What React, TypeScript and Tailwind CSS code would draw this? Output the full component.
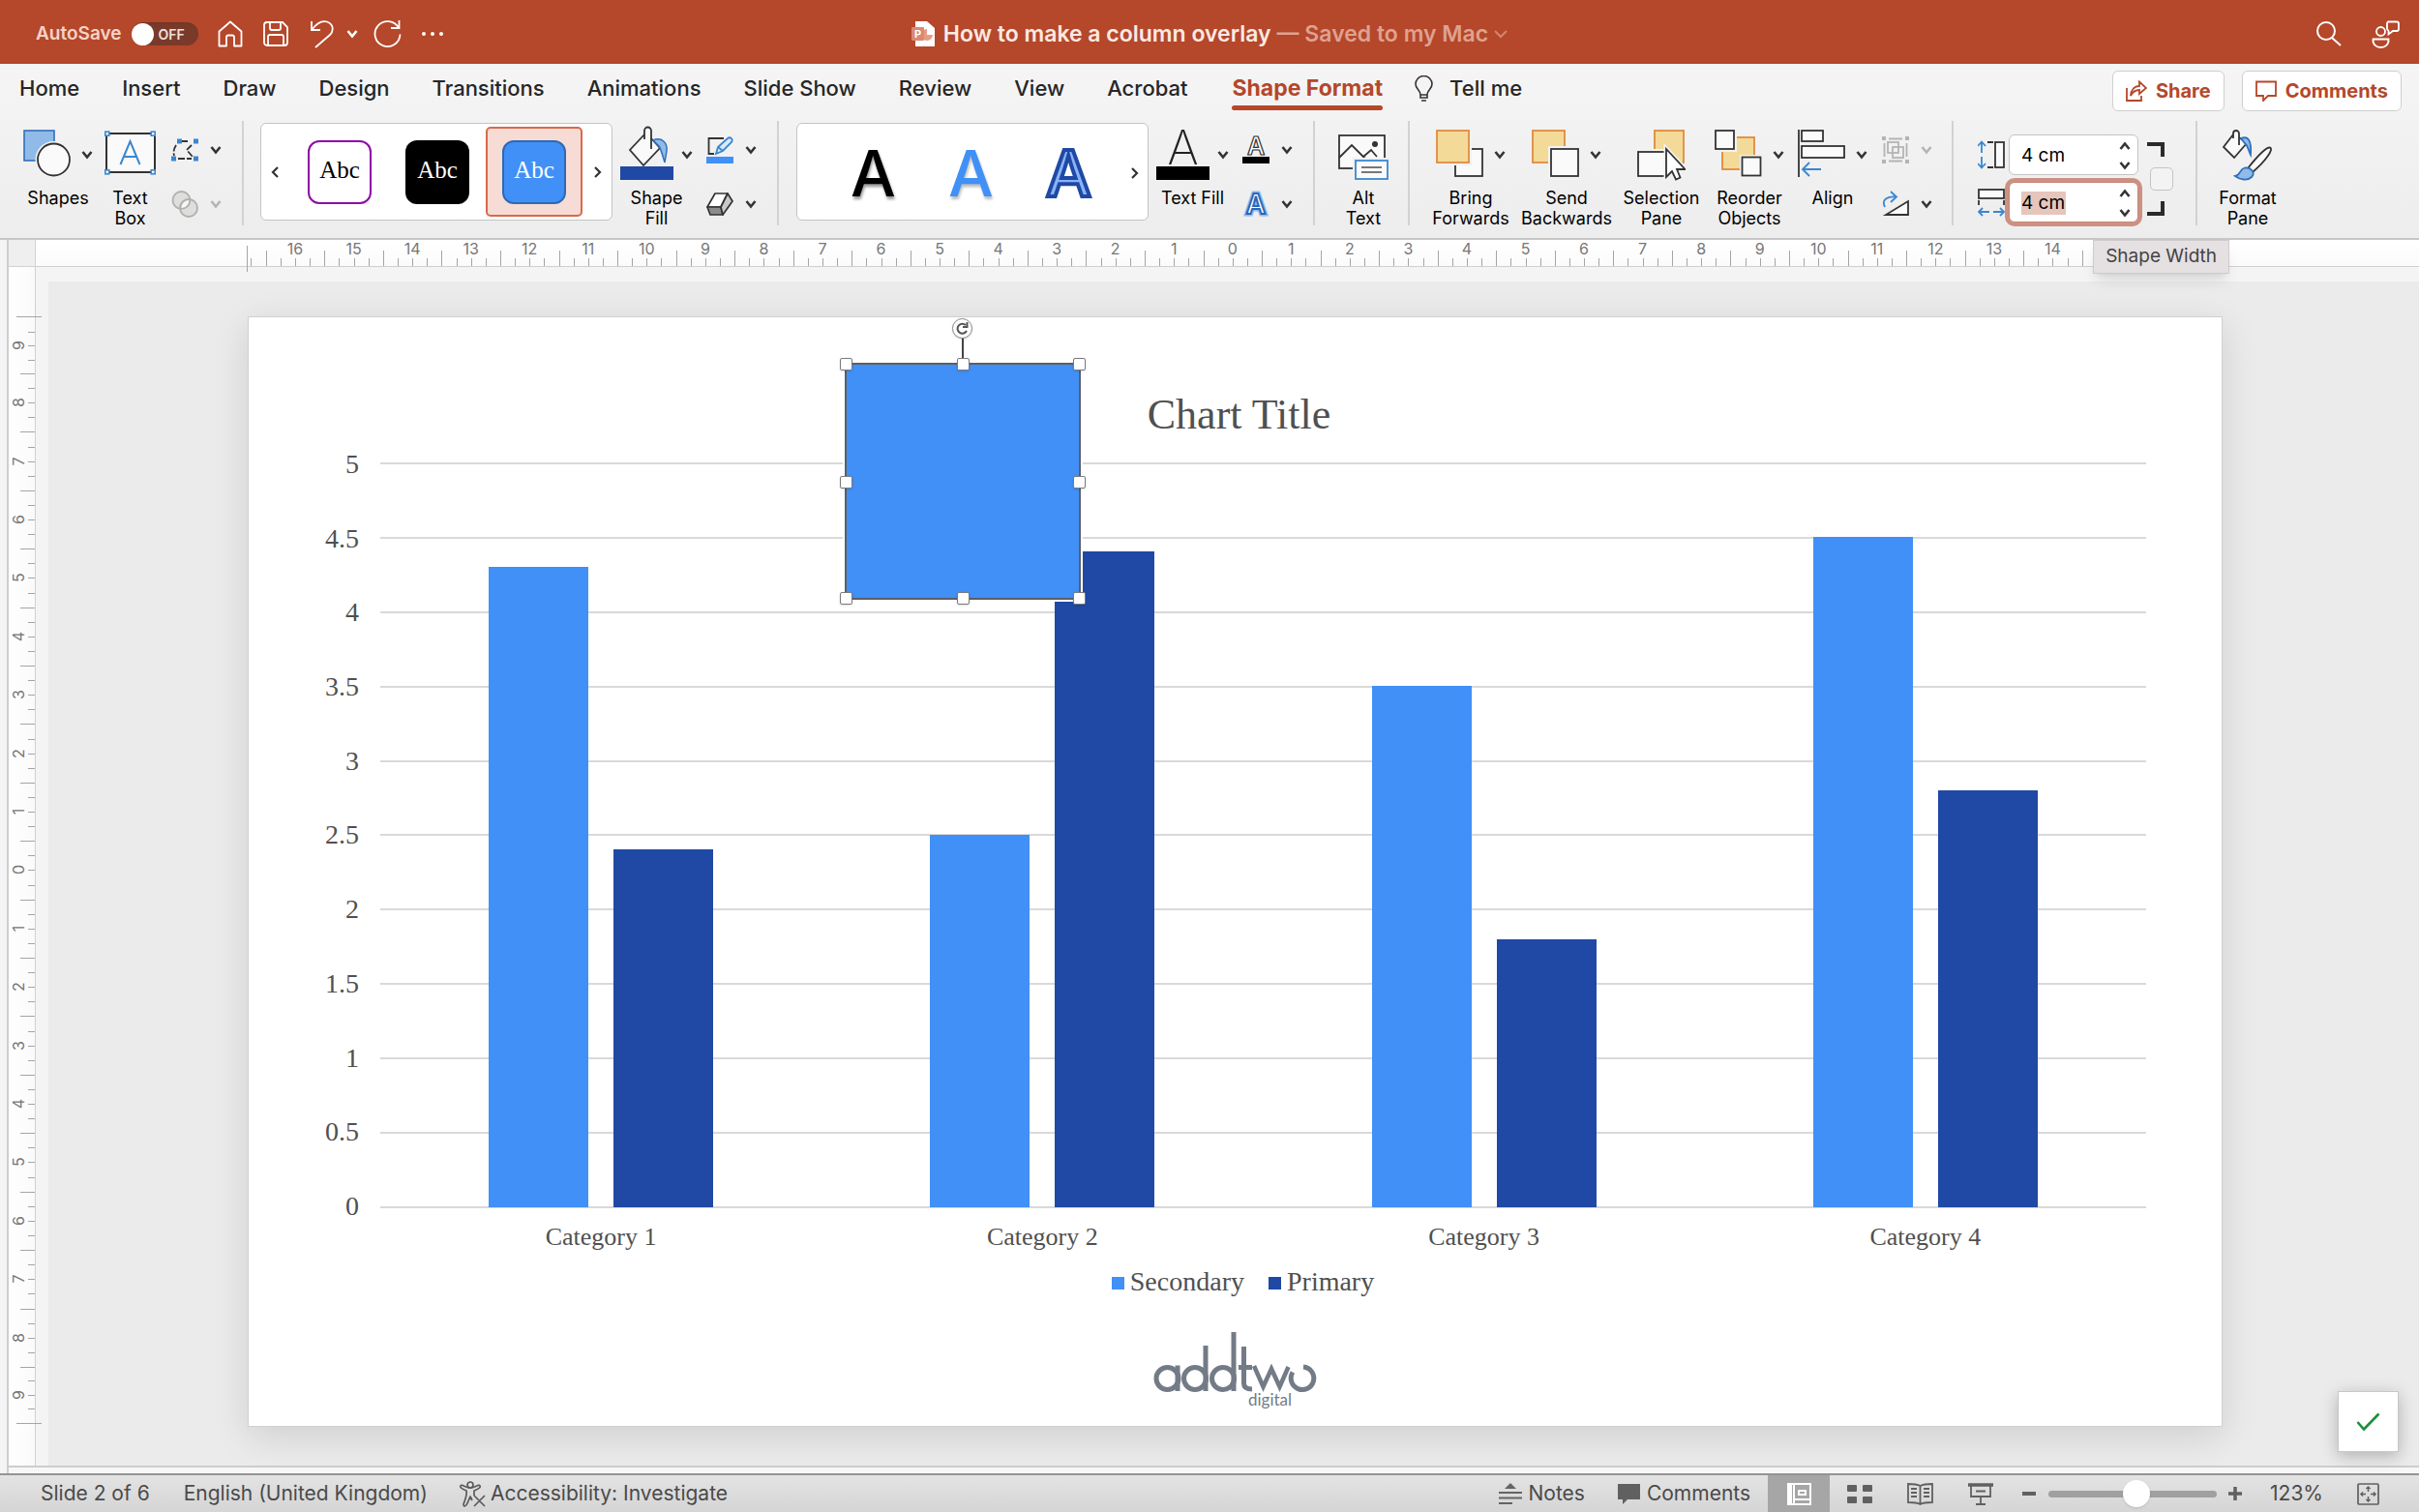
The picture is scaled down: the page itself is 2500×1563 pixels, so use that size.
import type { ReactNode } from "react";

const ink = "#333333";
const blue = "#3a87cf";

function Chevron({ className = "", color = ink }: { className?: string; color?: string }) {
  return (
    <svg width="12" height="12" viewBox="0 0 12 12" className={"shrink-0 " + className} fill="none" stroke={color} strokeWidth="2.6">
      <path d="M1.5 3 6 8.5 10.5 3" />
    </svg>
  );
}

function Divider() {
  return <div className="h-[108px] w-[2px] shrink-0 self-start bg-[#d2d2d2]" />;
}

function Tool({ icon, label, chevron = false, className, gap = "gap-[11px]" }: { icon: ReactNode; label: string[]; chevron?: boolean; className: string; gap?: string }) {
  return (
    <button className={"flex shrink-0 flex-col items-center pt-[9px] " + className}>
      <span className={"flex h-[54px] items-start " + gap}>
        {icon}
        {chevron && <Chevron className="mt-[20px]" />}
      </span>
      <span className="mt-[6px] flex flex-col items-center text-[18px] leading-[21px] whitespace-nowrap text-black">
        {label.map((l) => (
          <span key={l}>{l}</span>
        ))}
      </span>
    </button>
  );
}

function SmallPair({ items, className = "" }: { items: { name: string; icon: ReactNode; off?: boolean }[]; className?: string }) {
  return (
    <div className={"flex shrink-0 flex-col gap-[28px] pt-[16px] " + className}>
      {items.map((it) => (
        <button key={it.name} aria-label={it.name} className="flex h-[28px] items-center gap-[12px]">
          {it.icon}
          <Chevron color={it.off ? "#b4b4b4" : ink} />
        </button>
      ))}
    </div>
  );
}

/* ---------- ribbon icons ---------- */

const ShapesIcon = (
  <svg width="49" height="50" viewBox="0 0 49 50" className="overflow-visible">
    <rect x="1" y="1" width="31" height="31" fill="#90bbe8" stroke="#2f70bd" strokeWidth="1.6" />
    <circle cx="31.5" cy="31" r="19" fill="#f3f3f3" />
    <circle cx="31.5" cy="31" r="16.5" fill="#fafafa" stroke={ink} strokeWidth="1.8" />
  </svg>
);

const TextBoxIcon = (
  <svg width="53" height="50" viewBox="0 0 53 50">
    <rect x="2" y="4" width="50" height="40" fill="#fafafa" stroke={ink} strokeWidth="2" />
    <path d="M16.500 36 26.500 12 36.500 36M20 28H33" fill="none" stroke={blue} strokeWidth="2" />
    {[[2, 4], [52, 4], [2, 44], [52, 44]].map(([x, y]) => (
      <rect key={x + "-" + y} x={x === 2 ? 0.8 : 48.2} y={y === 4 ? 2.2 : 41.800} width="4" height="4" fill="#fff" stroke={blue} strokeWidth="1.6" />
    ))}
  </svg>
);

const EditPointsIcon = (
  <svg width="28" height="28" viewBox="0 0 28 28" fill="none" stroke={ink} strokeWidth="1.8">
    <path d="M10 5h9M5 9C2.500 13 2 16 3 20M21 9 16 14 22 21M7 23h14" strokeDasharray="7 2" />
    <path d="M6 2.500h5v5H6zM23 2.500h5v5h-5zM0 20.500h5v5H0zM23 20.500h5v5h-5z" fill={blue} stroke="none" />
  </svg>
);

const MergeIcon = (
  <svg width="28" height="28" viewBox="0 0 28 28" fill="#dededc" stroke="#b0b0ae" strokeWidth="1.8">
    <circle cx="10.500" cy="10" r="9" />
    <circle cx="18" cy="18" r="9" />
    <path d="M9.300 18.800A9 9 0 0 1 19.300 9.200 9 9 0 0 1 9.300 18.800z" fill="#f6f6f6" />
  </svg>
);

const ShapeFillIcon = (
  <svg width="55" height="54" viewBox="0 0 55 54" className="overflow-visible">
    <path d="M25 5 10 21 24 37 41 19 32 9" fill="#fafafa" stroke={ink} strokeWidth="1.8" />
    <path d="M32 20V1a3.500 3.500 0 0 0-7 0v9" fill="#fafafa" stroke={ink} strokeWidth="1.8" />
    <path d="M34 11C43 7 49 14 48 22L46 34C43 24 42 20 40 17z" fill="#90bbe8" stroke="#2f70bd" strokeWidth="1.500" />
    <rect y="38" width="55" height="14" fill="#1f49a5" />
  </svg>
);

const OutlineIcon = (
  <svg width="28" height="28" viewBox="0 0 28 28" fill="none" strokeWidth="1.800">
    <path d="M18 2H2.500V18H8" stroke={ink} />
    <path d="M10 18 12 11 22 2c3-2 6 1 4 4L17 15z" fill="#d9e9f8" stroke={blue} />
    <path d="m12 11 5 4" stroke={blue} />
    <rect y="21" width="28" height="7" fill="#4090f7" />
  </svg>
);

const EffectsIcon = (
  <svg width="28" height="28" viewBox="0 0 28 28" stroke={ink} strokeWidth="1.700" strokeLinejoin="round">
    <path d="M9 3H22L15 17H1z" fill="#fff" />
    <path d="M1 17H15L17 25H4z" fill="#8c8c8a" />
    <path d="M22 3 27 11 17 25 15 17z" fill="#c9c9c9" />
  </svg>
);

const TextFillIcon = (
  <svg width="55" height="54" viewBox="0 0 55 54" className="overflow-visible">
    <text x="27.500" y="36" textAnchor="middle" fontFamily="Inter, sans-serif" fontWeight="200" fontSize="49" fill="#222">A</text>
    <rect y="38" width="55" height="14" fill="#000" />
  </svg>
);

const TextOutlineIcon = (
  <svg width="28" height="28" viewBox="0 0 28 28" className="overflow-visible">
    <text x="14" y="19" textAnchor="middle" fontFamily="Inter, sans-serif" fontWeight="600" fontSize="25" fill="#fff" stroke={ink} strokeWidth="1.200">A</text>
    <rect y="21" width="28" height="7" fill="#000" />
  </svg>
);

const TextEffectsIcon = (
  <svg width="28" height="28" viewBox="0 0 28 28" className="overflow-visible">
    <text x="14" y="24" textAnchor="middle" fontFamily="Inter, sans-serif" fontWeight="600" fontSize="28" fill="#fff" stroke="#8fbdf0" strokeWidth="5">A</text>
    <text x="14" y="24" textAnchor="middle" fontFamily="Inter, sans-serif" fontWeight="600" fontSize="28" fill="#fff" stroke="#2b66b8" strokeWidth="2">A</text>
  </svg>
);

const AltTextIcon = (
  <svg width="52" height="54" viewBox="0 0 52 54" fill="none" stroke={ink} strokeWidth="1.800">
    <rect x="1" y="6" width="47" height="34" fill="#fafafa" />
    <path d="M1 29 14 16 28 30M26 28 34 21 40 28" />
    <circle cx="38" cy="15" r="3" fill={ink} stroke="none" />
    <rect x="15" y="29" width="37" height="24" fill="#f1f1f1" stroke="none" />
    <rect x="18" y="32" width="33" height="19" fill="#fafafa" stroke={blue} />
    <path d="M24 39h21M24 44h21" stroke="#777" />
  </svg>
);

const BringIcon = (
  <svg width="49" height="50" viewBox="0 0 49 50" strokeWidth="1.800">
    <rect x="20" y="20" width="28" height="28" fill="#fafafa" stroke={ink} />
    <rect x="0" y="0" width="37" height="37" fill="#f2f2f2" />
    <rect x="1" y="1" width="33" height="33" fill="#f3da98" stroke="#e08b3e" />
  </svg>
);

const SendIcon = (
  <svg width="49" height="50" viewBox="0 0 49 50" strokeWidth="1.800">
    <rect x="1" y="1" width="33" height="33" fill="#f3da98" stroke="#e08b3e" />
    <rect x="17" y="17" width="32" height="33" fill="#f2f2f2" />
    <rect x="20" y="20" width="28" height="28" fill="#fafafa" stroke={ink} />
  </svg>
);

const SelectionIcon = (
  <svg width="50" height="54" viewBox="0 0 50 54" strokeWidth="1.800">
    <rect x="18" y="1" width="30" height="33" fill="#f3da98" stroke="#e08b3e" />
    <rect x="0" y="20" width="34" height="29" fill="#f2f2f2" />
    <rect x="1" y="23" width="30" height="25" fill="#fafafa" stroke={ink} />
    <path d="M30 20V49L36 43 40 52 45 50 41 41H50z" fill="#fff" stroke="#f2f2f2" strokeWidth="5" />
    <path d="M30 20V49L36 43 40 51.500 44.500 49.500 41 41H49.500z" fill="#fff" stroke={ink} />
  </svg>
);

const ReorderIcon = (
  <svg width="49" height="50" viewBox="0 0 49 50" strokeWidth="1.800">
    <rect x="8" y="8" width="33" height="33" fill="#f3da98" stroke="#e08b3e" />
    <path d="M0 0h23v23H0zM26 26h24v24H26z" fill="#f2f2f2" />
    <rect x="1" y="1" width="19" height="19" fill="#fafafa" stroke={ink} />
    <rect x="28.500" y="28.500" width="19" height="19" fill="#fafafa" stroke={ink} />
  </svg>
);

const AlignIcon = (
  <svg width="49" height="50" viewBox="0 0 49 50" fill="#fafafa" stroke={ink} strokeWidth="1.800">
    <path d="M1 0V49" />
    <rect x="4" y="1" width="22" height="11" />
    <rect x="4" y="17" width="44" height="12" />
    <path d="M24 41H5M12 34 5 41 12 48" fill="none" stroke={blue} />
  </svg>
);

const GroupIcon = (
  <svg width="28" height="28" viewBox="0 0 28 28" fill="none" stroke="#b4b4b4" strokeWidth="1.800">
    <path d="M7 2.500h14M7 25.500h14M2.500 7v14M25.500 7v14" />
    <rect x="6" y="6" width="11" height="11" />
    <rect x="11" y="11" width="11" height="11" />
    <path d="M0 0h4v4H0zM24 0h4v4h-4zM0 24h4v4H0zM24 24h4v4h-4z" fill="#b4b4b4" stroke="none" />
  </svg>
);

const RotateIcon = (
  <svg width="28" height="28" viewBox="0 0 28 28" fill="none" stroke={ink} strokeWidth="1.800">
    <path d="M27 11V25H4z" fill="#fafafa" />
    <path d="M3 17C-1 9 6 6 14 6.500M9 1 15 6.500 9 12" stroke={blue} />
  </svg>
);

const HeightIcon = (
  <svg width="28" height="30" viewBox="0 0 28 30" fill="none" stroke={ink} strokeWidth="1.800">
    <rect x="18" y="2" width="9" height="26" fill="#fafafa" />
    <path d="M10 2h6M10 28h6" />
    <path d="M4 13V2M0 6 4 1.500 8 6M4 17V28M0 24 4 28.500 8 24" stroke={blue} />
  </svg>
);

const WidthIcon = (
  <svg width="28" height="30" viewBox="0 0 28 30" fill="none" stroke={ink} strokeWidth="1.800">
    <rect x="1" y="2" width="26" height="9" fill="#fafafa" />
    <path d="M1 13v5M27 13v5" />
    <path d="M12 25H1M5 21 1 25 5 29M16 25H27M23 21 27 25 23 29" stroke={blue} />
  </svg>
);

const FormatPaneIcon = (
  <svg width="52" height="54" viewBox="0 0 52 54" strokeWidth="1.800">
    <path d="M11 5 1 18 12 29 25 14 17 8" fill="#fafafa" stroke={ink} />
    <path d="M17 16V4a3 3 0 0 0-6 0V9" fill="#fafafa" stroke={ink} />
    <path d="M19 9C27 6 30 12 29 26C26 20 26 16 23 14z" fill="#90bbe8" stroke="#2f70bd" />
    <path d="M26 40C34 30 44 18 49 18.500C53 20 45 32 31 44z" fill="#fafafa" stroke={ink} />
    <path d="M13 48C19 47 17 41 23 39.500C30 39 34 45 30 49C26 53 18 52 13 48z" fill="#90bbe8" stroke="#2f70bd" />
  </svg>
);

/* ---------- top bars ---------- */

function TitleBar() {
  return (
    <header className="grid h-[66px] grid-cols-[1fr_auto_1fr] items-center bg-[#b5472a] pt-[4px] text-white">
      <div className="flex items-center pl-[37px]">
        <label className="flex items-center gap-[10px] text-[19px] font-semibold text-[#f5d3c8]">
          AutoSave
          <input type="checkbox" className="sr-only" />
          <span className="flex h-[24px] w-[69px] items-center rounded-full bg-[#7a3a2a] pr-[14px] text-[14px] font-semibold text-[#efe0db] shadow-inner">
            <span className="mr-[5px] h-[23px] w-[23px] shrink-0 rounded-full bg-white" />
            OFF
          </span>
        </label>
        <button aria-label="Home" className="ml-[20px]">
          <svg width="26" height="28" viewBox="0 0 26 28" fill="none" stroke="#fff" strokeWidth="1.800" strokeLinejoin="round">
            <path d="M1.500 11.500 13 1.500 24.500 11.500V26.500H17V17.500a2 2 0 0 0-2-2H11a2 2 0 0 0-2 2V26.500H1.500z" />
          </svg>
        </button>
        <button aria-label="Save" className="ml-[21px]">
          <svg width="26" height="26" viewBox="0 0 26 26" fill="none" stroke="#fff" strokeWidth="1.800">
            <path d="M4 1H20L25 6V22a3 3 0 0 1-3 3H4a3 3 0 0 1-3-3V4a3 3 0 0 1 3-3zM7 1v6a2 2 0 0 0 2 2h7a2 2 0 0 0 2-2V1M5 25V16a2 2 0 0 1 2-2H19a2 2 0 0 1 2 2v9" />
          </svg>
        </button>
        <button aria-label="Undo" className="ml-[22px]">
          <svg width="26" height="30" viewBox="0 0 26 30" fill="none" stroke="#fff" strokeWidth="1.800">
            <path d="M2 2V11H11M2 11C8 3 13 1 18 2.500C25 5 25 12 21 16L6 29" />
          </svg>
        </button>
        <Chevron color="#fff" className="ml-[12px]" />
        <button aria-label="Redo" className="ml-[16px]">
          <svg width="29" height="30" viewBox="0 0 29 30" fill="none" stroke="#fff" strokeWidth="1.800">
            <path d="M26.500 1V9H18M26 9A13 13 0 1 0 27.500 15.500" />
          </svg>
        </button>
        <button aria-label="More" className="ml-[21px] flex gap-[5px]">
          <span className="h-[4px] w-[4px] rounded-full bg-white" />
          <span className="h-[4px] w-[4px] rounded-full bg-white" />
          <span className="h-[4px] w-[4px] rounded-full bg-white" />
        </button>
      </div>
      <div className="flex items-center text-[23px] font-semibold whitespace-nowrap">
        <svg width="24" height="26" viewBox="0 0 24 26" className="mr-[9px]">
          <path d="M4 0H16L24 7V26H4z" fill="#fff" />
          <path d="M16 8v6h6a6 6 0 1 1-6-6z" fill="#e79c84" />
          <rect y="6" width="13" height="14" rx="1" fill="#d98a72" />
          <text x="6.500" y="17" textAnchor="middle" fontFamily="Inter, sans-serif" fontWeight="700" fontSize="11" fill="#fff">P</text>
        </svg>
        <h1 className="text-[#fbe9e3]">How to make a column overlay</h1>
        <span className="ml-[6px] text-[#dfa190]">— Saved to my Mac</span>
        <svg width="14" height="12" viewBox="0 0 14 12" className="ml-[6px]" fill="none" stroke="#d08670" strokeWidth="2">
          <path d="M1 3 7 9 13 3" />
        </svg>
      </div>
      <div className="flex items-center justify-end gap-[31px] pr-[20px]">
        <button aria-label="Search">
          <svg width="26" height="26" viewBox="0 0 26 26" fill="none" stroke="#fff" strokeWidth="2">
            <circle cx="10" cy="10" r="9" />
            <path d="M16 17 25 25" />
          </svg>
        </button>
        <button aria-label="Share feedback">
          <svg width="29" height="29" viewBox="0 0 29 29" fill="none" stroke="#fff" strokeWidth="1.800">
            <path d="M17 1.500H26a2 2 0 0 1 2 2V9a2 2 0 0 1-2 2H22L17.500 14.500V11L16 9V3.500a2 2 0 0 1 1-2z" />
            <circle cx="9.500" cy="11.500" r="4.500" />
            <path d="M1.500 19.500H17.500C18 25 14 28 9.500 28S1 25 1.500 19.500z" />
          </svg>
        </button>
      </div>
    </header>
  );
}

const tabs = ["Home", "Insert", "Draw", "Design", "Transitions", "Animations", "Slide Show", "Review", "View", "Acrobat"];

function TabRow() {
  return (
    <nav className="flex h-[59px] items-start pt-[7px] text-[22px] leading-[36px] font-medium whitespace-nowrap text-[#262626]">
      <div className="flex items-start gap-[44px] pl-[20px]">
        {tabs.map((t) => (
          <button key={t}>{t}</button>
        ))}
        <button className="flex flex-col items-center px-[2px] text-[23px] font-bold text-[#b5472a]">
          Shape Format
          <span className="h-[5px] w-full rounded-full bg-[#b5472a]" />
        </button>
      </div>
      <button className="ml-[31px] flex items-center gap-[17px]">
        <svg width="19" height="27" viewBox="0 0 19 27" fill="none" stroke={ink} strokeWidth="1.600">
          <path d="M6 20C6 15 1 14 1 9a8.500 8.500 0 0 1 17 0C18 14 13 15 13 20zM6 20v3h7v-3M7 26h5" />
        </svg>
        Tell me
      </button>
      <div className="ml-auto flex gap-[18px] pr-[18px] text-[20px] font-bold text-[#b5472a]">
        <button className="flex h-[42px] items-center gap-[9px] rounded-[6px] border border-[#cfcfcf] bg-white px-[13px]">
          <svg width="22" height="22" viewBox="0 0 22 22" fill="none" stroke="#b5472a" strokeWidth="1.800">
            <path d="M1 8V21H16V16M5 16C5 10 9 6 14 6V1.500L21 8 14 14V10C10 10 7 12 5 16z" />
          </svg>
          Share
        </button>
        <button className="flex h-[42px] items-center gap-[9px] rounded-[6px] border border-[#cfcfcf] bg-white px-[13px]">
          <svg width="22" height="22" viewBox="0 0 22 22" fill="none" stroke="#b5472a" strokeWidth="1.800">
            <path d="M1 1.500H21V16H13L8 21V16H1z" />
          </svg>
          Comments
        </button>
      </div>
    </nav>
  );
}

function GalleryArrow({ dir, className }: { dir: "prev" | "next"; className: string }) {
  return (
    <button aria-label={dir} className={className}>
      <svg width="8" height="12" viewBox="0 0 8 12" fill="none" stroke={ink} strokeWidth="2.200">
        <path d={dir === "prev" ? "M7 1 2 6 7 11" : "M1 1 6 6 1 11"} />
      </svg>
    </button>
  );
}

function SizeField({ id, label, active = false }: { id: string; label: string; active?: boolean }) {
  return (
    <div className={"flex h-[42px] w-[134px] items-center rounded-[6px] border bg-white pt-[1px] pr-[7px] " + (active ? "border-[#c58677] ring-4 ring-[#cc9182]" : "border-[#c4c4c4]")}>
      <label htmlFor={id} className="sr-only">{label}</label>
      <input
        id={id}
        defaultValue="4 cm"
        className={
          "ml-[12px] h-[32px] w-[76px] bg-[length:46px_24px] bg-[position:0_4px] bg-no-repeat text-[19px] text-black outline-none " +
          (active ? "bg-linear-to-r from-[#e6c5bc] to-[#e6c5bc]" : "")
        }
      />
      <span className="ml-auto flex flex-col gap-[8px]">
        <button aria-label={label + " up"}><Chevron className="rotate-180" /></button>
        <button aria-label={label + " down"}><Chevron /></button>
      </span>
    </div>
  );
}

function Ribbon() {
  return (
    <section className="flex h-[182px] flex-col border-b-2 border-[#c6c6c6] bg-linear-to-b from-[#f5f5f5] to-[#ededed]">
      <TabRow />
      <div className="flex flex-1 items-start pl-[24px]">
        <Tool icon={ShapesIcon} label={["Shapes"]} chevron className="w-[72px]" />
        <Tool icon={TextBoxIcon} label={["Text", "Box"]} className="ml-[12px] w-[53px]" />
        <SmallPair className="ml-[16px]" items={[{ name: "Edit shape", icon: EditPointsIcon }, { name: "Merge shapes", icon: MergeIcon, off: true }]} />
        <div className="ml-[21px]"><Divider /></div>

        <div className="mt-[2px] ml-[17px] flex h-[101px] w-[364px] shrink-0 items-center rounded-[6px] border border-[#c4c4c4] bg-white">
          <GalleryArrow dir="prev" className="ml-[10px]" />
          <button className="ml-[30px] h-[66px] w-[66px] rounded-[12px] border-2 border-[#8e0aa8] bg-white pb-[3px] font-['Liberation_Serif',serif] text-[25px] text-black">Abc</button>
          <button className="ml-[35px] h-[66px] w-[66px] rounded-[12px] bg-black pb-[3px] font-['Liberation_Serif',serif] text-[25px] text-white">Abc</button>
          <span className="ml-[17px] flex h-[93px] w-[100px] items-center justify-center rounded-[5px] border-2 border-[#d9694b] bg-[#f6dcd5]">
            <button className="h-[66px] w-[66px] rounded-[12px] border-2 border-[#2f69b4] bg-[#4090f7] pb-[3px] font-['Liberation_Serif',serif] text-[25px] text-white">Abc</button>
          </span>
          <GalleryArrow dir="next" className="ml-[12px]" />
        </div>

        <Tool icon={ShapeFillIcon} label={["Shape", "Fill"]} chevron gap="gap-[8px]" className="ml-[8px] w-[75px]" />
        <SmallPair className="ml-[14px]" items={[{ name: "Shape outline", icon: OutlineIcon }, { name: "Shape effects", icon: EffectsIcon }]} />
        <div className="ml-[21px]"><Divider /></div>

        <div className="mt-[2px] ml-[18px] flex h-[101px] w-[364px] shrink-0 items-center rounded-[6px] border border-[#c4c4c4] bg-white pt-[2px] pl-[28px] text-[66px] leading-[80px] font-medium">
          <button className="w-[101px] text-black [text-shadow:1px_3px_3px_#999]">A</button>
          <button className="w-[101px] text-[#4090f7] [text-shadow:1px_3px_3px_#bbb]">A</button>
          <button className="w-[101px] text-[#8ab2f8] [-webkit-text-stroke:4px_#1f49a5]">A</button>
          <GalleryArrow dir="next" className="ml-[14px] flex" />
        </div>

        <Tool icon={TextFillIcon} label={["Text Fill"]} chevron gap="gap-[8px]" className="ml-[8px] w-[75px]" />
        <SmallPair className="ml-[14px]" items={[{ name: "Text outline", icon: TextOutlineIcon }, { name: "Text effects", icon: TextEffectsIcon }]} />
        <div className="ml-[21px]"><Divider /></div>
        <Tool icon={AltTextIcon} label={["Alt", "Text"]} className="ml-[24px] w-[52px]" />
        <div className="ml-[20px]"><Divider /></div>

        <Tool icon={BringIcon} label={["Bring", "Forwards"]} chevron className="ml-[23px] w-[80px]" />
        <Tool icon={SendIcon} label={["Send", "Backwards"]} chevron className="ml-[12px] w-[94px]" />
        <Tool icon={SelectionIcon} label={["Selection", "Pane"]} className="ml-[11px] w-[80px]" />
        <Tool icon={ReorderIcon} label={["Reorder", "Objects"]} chevron className="ml-[15px] w-[72px]" />
        <Tool icon={AlignIcon} label={["Align"]} chevron className="ml-[14px] w-[72px]" />
        <SmallPair className="ml-[15px]" items={[{ name: "Group", icon: GroupIcon, off: true }, { name: "Rotate", icon: RotateIcon }]} />
        <div className="ml-[20px]"><Divider /></div>

        <div className="ml-[25px] flex shrink-0 flex-col gap-[19px] pt-[20px]">
          {HeightIcon}
          {WidthIcon}
        </div>
        <div className="ml-[4px] flex shrink-0 flex-col gap-[7px] pt-[14px]">
          <SizeField id="shape-height" label="Shape Height" />
          <SizeField id="shape-width" label="Shape Width" active />
        </div>
        <div className="ml-[9px] flex shrink-0 flex-col items-start pt-[22px]">
          <span className="h-[15px] w-[18px] border-t-4 border-r-4 border-[#2b2b2b]" />
          <input type="checkbox" aria-label="Lock aspect ratio" className="my-[11px] ml-[3px] h-[24px] w-[24px] appearance-none rounded-[5px] border border-[#c4c4c4] bg-[#f3f3f3]" />
          <span className="h-[15px] w-[18px] border-r-4 border-b-4 border-[#2b2b2b]" />
        </div>
        <div className="ml-[23px]"><Divider /></div>
        <Tool icon={FormatPaneIcon} label={["Format", "Pane"]} className="ml-[21px] w-[62px]" />
      </div>
    </section>
  );
}

/* ---------- rulers ---------- */

const across = Array.from({ length: 33 }, (_, i) => Math.abs(i - 16));
const down = Array.from({ length: 19 }, (_, i) => Math.abs(i - 9));
const LAST_LABEL = 30;

function HorizontalRuler() {
  return (
    <div className="flex h-[28px] border-b border-[#cfcfcf] bg-linear-to-b from-white to-[#fbfbfb] pr-[203px] pl-[218px] text-[16px] text-[#777]">
      <div className="-mb-[6px] h-[27px] w-[1px] self-end bg-[#a5a5a5]" />
      <div className="flex flex-[0.31] items-end"><span className="ml-[3px] h-[8px] w-[1px] bg-[#a5a5a5]" /></div>
      {across.map((n, i) => (
        <div key={i} className="grid flex-1 items-end">
          {i <= LAST_LABEL && <span className="self-start text-center leading-[18px] [grid-area:1/1]">{n}</span>}
          <span className="grid grid-cols-4 items-end [grid-area:1/1]">
            <i className="h-[16px] border-l border-[#a5a5a5]" />
            <i className="h-[8px] border-l border-[#a5a5a5]" />
            <i className="h-[8px] border-l border-[#a5a5a5]" />
            <i className="h-[8px] border-l border-[#a5a5a5]" />
          </span>
        </div>
      ))}
      <div className="flex-[0.38] border-r border-[#a5a5a5]" />
    </div>
  );
}

function VerticalRuler() {
  return (
    <div className="flex w-[28px] shrink-0 flex-col border-r border-[#d2d2d2] bg-linear-to-r from-white to-[#fafafa] pt-[51px] pb-[43px] text-[16px] text-[#777]">
      <div className="-mr-[7px] ml-[8px] h-[1px] bg-[#a5a5a5]" />
      {down.map((n, i) => (
        <div key={i} className={"grid " + (n === 9 ? "flex-[0.96]" : "flex-1")}>
          <span className="flex h-[20px] w-[20px] -rotate-90 items-center justify-center self-center [grid-area:1/1]">{n}</span>
          <span className="grid grid-rows-4 justify-items-end [grid-area:1/1]">
            <i className={"w-[15px] border-[#a5a5a5] " + (i === 0 ? "" : "border-t")} />
            <i className="w-[7px] border-t border-[#a5a5a5]" />
            <i className="w-[7px] border-t border-[#a5a5a5]" />
            <i className="w-[7px] border-t border-[#a5a5a5]" />
          </span>
        </div>
      ))}
      <div className="-mr-[7px] ml-[8px] h-[1px] bg-[#a5a5a5]" />
    </div>
  );
}

/* ---------- slide ---------- */

const MAX = 5;
const data = [
  { name: "Category 1", secondary: 4.3, primary: 2.4 },
  { name: "Category 2", secondary: 2.5, primary: 4.4 },
  { name: "Category 3", secondary: 3.5, primary: 1.8 },
  { name: "Category 4", secondary: 4.5, primary: 2.8 },
];
const steps = ["5", "4.5", "4", "3.5", "3", "2.5", "2", "1.5", "1", "0.5", "0"];

function Chart() {
  return (
    <figure className="flex flex-col font-['Liberation_Serif',serif] text-[#505050]">
      <figcaption className="mt-[74px] pl-[8px] text-center text-[44px] leading-[54px]">Chart Title</figcaption>
      <div className="mt-[22px] flex pr-[78px] pl-[60px]">
        <ol className="-my-[18px] flex w-[54px] flex-col justify-between text-right text-[28px] leading-[40px]">
          {steps.map((s) => (
            <li key={s}>{s}</li>
          ))}
        </ol>
        <div className="ml-[22px] grid h-[771px] flex-1">
          <div className="flex flex-col justify-between [grid-area:1/1]">
            {steps.map((s) => (
              <span key={s} className="h-[2px] bg-[#d9d9d9]" />
            ))}
          </div>
          <div className="grid grid-cols-4 pb-[1px] [grid-area:1/1]">
            {data.map((d) => (
              <div key={d.name} className="flex items-end justify-center gap-[26px]">
                <span className="w-[103px] bg-[#4090f7]" style={{ height: `${(d.secondary / MAX) * 100}%` }} />
                <span className="w-[103px] bg-[#1f49a5]" style={{ height: `${(d.primary / MAX) * 100}%` }} />
              </div>
            ))}
          </div>
        </div>
      </div>
      <div className="mt-[14px] grid grid-cols-4 pr-[78px] pl-[136px] text-center text-[26px] leading-[32px]">
        {data.map((d) => (
          <span key={d.name}>{d.name}</span>
        ))}
      </div>
      <div className="mt-[12px] flex justify-center gap-[25px] pl-[16px] text-[28px] leading-[36px]">
        <span className="flex items-center gap-[6px]"><i className="mt-[3px] h-[13px] w-[13px] bg-[#4090f7]" />Secondary</span>
        <span className="flex items-center gap-[6px]"><i className="mt-[3px] h-[13px] w-[13px] bg-[#1f49a5]" />Primary</span>
      </div>
    </figure>
  );
}

function Logo() {
  return (
    <svg width="172" height="82" viewBox="0 0 172 82" className="mx-auto mt-[33px] mb-[16px] overflow-visible" fill="none" stroke="#737b87" strokeWidth="5" role="img" aria-label="addtwo digital">
      <circle cx="15.500" cy="49" r="11.500" />
      <line x1="26" y1="35.500" x2="26" y2="62" />
      <circle cx="44" cy="49" r="11.500" />
      <line x1="55" y1="15" x2="55" y2="62" />
      <circle cx="73" cy="49" r="11.500" />
      <line x1="84" y1="1" x2="84" y2="62" />
      <path d="M94.500 16V54Q94.500 60 103 60M89 37.500H103" strokeWidth="5" />
      <polyline points="105,36 114.500,57.500 123,39 131.500,57.500 140.500,37" strokeWidth="4.500" />
      <path d="M156 37A11.800 11.800 0 1 1 145 42.500" strokeWidth="5" />
      <text x="99" y="77" fontFamily="Lato, sans-serif" fontSize="17" fill="#737b87" stroke="none">digital</text>
    </svg>
  );
}

const handles = [
  "-top-[7px] -left-[7px]",
  "-top-[7px] left-[114px]",
  "-top-[7px] -right-[7px]",
  "top-[115px] -left-[7px]",
  "top-[115px] -right-[7px]",
  "-bottom-[7px] -left-[7px]",
  "-bottom-[7px] left-[114px]",
  "-bottom-[7px] -right-[7px]",
];

function SelectedShape() {
  return (
    <div className="absolute top-[47px] left-[30.2%] h-[245px] w-[244px] border-2 border-[#5c5f66] bg-[#4090f7] outline-2 outline-white">
      <span className="absolute -top-[28px] left-[119px] h-[26px] w-[2px] bg-[#444]" />
      <span className="absolute -top-[48px] left-[109px] flex h-[21px] w-[21px] items-center justify-center rounded-full border border-[#888] bg-white shadow">
        <svg width="13" height="13" viewBox="0 0 13 13" fill="none" stroke="#555" strokeWidth="2">
          <path d="M11 9A5 5 0 1 1 10 3M11.500 0V5H7" />
        </svg>
      </span>
      {handles.map((h) => (
        <span key={h} className={"absolute h-[13px] w-[13px] rounded-[2px] border border-[#7a7a7a] bg-white shadow " + h} />
      ))}
    </div>
  );
}

/* ---------- status bar ---------- */

function StatusBar() {
  return (
    <footer className="flex h-[40px] items-center border-t-2 border-[#949494] bg-linear-to-b from-[#e3e3e3] to-[#d5d5d5] text-[21px] whitespace-nowrap text-[#4a4a4a]">
      <span className="ml-[42px]">Slide 2 of 6</span>
      <button className="ml-[35px]">English (United Kingdom)</button>
      <button className="ml-[33px] flex items-center gap-[5px]">
        <svg width="27" height="27" viewBox="0 0 27 27" fill="none" stroke="#5a5a5a" strokeWidth="1.700" strokeLinejoin="round">
          <circle cx="11" cy="4" r="3" />
          <path d="M2 4C-1 6 2 8 7 10C8 14 6 19 4 24C4 27 7 26 8 23L11 16L13 20M20 4C23 6 20 8 15 10V15M2 4C6 6 8 7 11 7S16 6 20 4M15 15 26 26M26 15 15 26" />
        </svg>
        Accessibility: Investigate
      </button>
      <button className="ml-auto flex items-center gap-[7px]">
        <svg width="24" height="22" viewBox="0 0 24 22" fill="none" stroke="#646464" strokeWidth="2">
          <path d="M6 6 12 0 18 6z" fill="#646464" stroke="none" />
          <path d="M0 10H24M0 15.500H24M0 21H14" />
        </svg>
        Notes
      </button>
      <button className="ml-[34px] flex items-center gap-[7px]">
        <svg width="23" height="21" viewBox="0 0 23 21" fill="#606060">
          <path d="M0 0H23V16H10L5 21V16H0z" />
        </svg>
        Comments
      </button>
      <button aria-label="Normal view" className="ml-[18px] flex h-full w-[64px] items-center justify-center bg-[#a6a6a6]">
        <svg width="25" height="23" viewBox="0 0 25 23" fill="none" stroke="#fff" strokeWidth="2">
          <path d="M1 1H24V22H1zM7 1V22M8 17H24" />
          <path d="M3 1V22" strokeWidth="4" />
          <path d="M12 8h7v4h-7z" />
        </svg>
      </button>
      <button aria-label="Slide sorter" className="ml-[18px] grid grid-cols-2 gap-x-[6px] gap-y-[5px]">
        <i className="h-[7px] w-[10px] rounded-[1px] bg-[#606060]" />
        <i className="h-[7px] w-[10px] rounded-[1px] bg-[#606060]" />
        <i className="h-[7px] w-[10px] rounded-[1px] bg-[#606060]" />
        <i className="h-[7px] w-[10px] rounded-[1px] bg-[#606060]" />
      </button>
      <button aria-label="Reading view" className="ml-[36px]">
        <svg width="27" height="23" viewBox="0 0 27 23" fill="none" stroke="#606060" strokeWidth="1.800">
          <path d="M13.500 3C10 1 5 1 1 1V20C6 20 10 20 13.500 22C17 20 21 20 26 20V1C22 1 17 1 13.500 3zM13.500 3V22M4 6H10M4 10H10M4 14H10M17 6H23M17 10H23M17 14H23" />
        </svg>
      </button>
      <button aria-label="Slide show" className="ml-[36px]">
        <svg width="26" height="23" viewBox="0 0 26 23" fill="none" stroke="#606060" strokeWidth="1.800">
          <path d="M0 2H26" strokeWidth="3.500" />
          <path d="M3 3V14H23V3M8 8.500H18M13 14V21M8 22H18" />
        </svg>
      </button>
      <button aria-label="Zoom out" className="ml-[30px] h-[4px] w-[14px] bg-[#606060]" />
      <input
        type="range"
        aria-label="Zoom"
        min={0}
        max={100}
        defaultValue={53}
        className="ml-[13px] h-[7px] w-[174px] appearance-none rounded-full bg-[#a0a0a0] [&::-webkit-slider-thumb]:h-[28px] [&::-webkit-slider-thumb]:w-[28px] [&::-webkit-slider-thumb]:appearance-none [&::-webkit-slider-thumb]:rounded-full [&::-webkit-slider-thumb]:bg-white [&::-webkit-slider-thumb]:shadow"
      />
      <button aria-label="Zoom in" className="ml-[12px]">
        <svg width="14" height="14" viewBox="0 0 14 14" stroke="#606060" strokeWidth="3.500">
          <path d="M7 0V14M0 7H14" />
        </svg>
      </button>
      <button className="ml-[29px]">123%</button>
      <button aria-label="Fit to window" className="mr-[41px] ml-[35px]">
        <svg width="23" height="23" viewBox="0 0 23 23" fill="none" stroke="#606060" strokeWidth="1.700">
          <rect x="1" y="1" width="21" height="21" rx="1" />
          <path d="M11.500 4V9M9.500 6l2-2 2 2M11.500 19V14M9.500 17l2 2 2-2M4 11.500H9M6 9.500l-2 2 2 2M19 11.500H14M17 9.500l2 2-2 2" strokeWidth="1.500" />
        </svg>
      </button>
    </footer>
  );
}

export default function App() {
  return (
    <div className="flex min-h-screen flex-col bg-[#f4f4f4] font-[Inter,sans-serif]">
      <TitleBar />
      <Ribbon />
      <main className="relative ml-[7px] flex flex-1 flex-col border-l-2 border-[#cdcdcd]">
        <div className="flex">
          <div className="h-[28px] w-[28px] shrink-0 border-r border-b border-[#d2d2d2] bg-[#efefef]" />
          <div className="min-w-0 flex-1"><HorizontalRuler /></div>
        </div>
        <div className="flex flex-1">
          <VerticalRuler />
          <div className="mt-[15px] ml-[13px] flex-1 bg-[#ebebeb] pt-[36px] pr-[203px] pb-[40px] pl-[206px]">
            <article className="relative border border-[#d0d0d0] bg-white shadow-[0_10px_36px_rgba(0,0,0,0.12)]">
              <Chart />
              <Logo />
              <SelectedShape />
            </article>
          </div>
        </div>
        <div className="h-[8px] border-t-2 border-[#cdcdcd] bg-[#f7f7f7]" />
        <div role="tooltip" className="absolute top-0 right-[196px] flex h-[35px] items-center border border-[#cfcbcc] bg-[#e5e0e2] px-[12px] text-[19px] text-[#444] shadow-lg">
          Shape Width
        </div>
        <button aria-label="Done" className="absolute right-[21px] bottom-[22px] flex h-[63px] w-[63px] items-center justify-center border border-[#c8c8c8] bg-white shadow-[0_4px_16px_rgba(0,0,0,0.25)]">
          <svg width="25" height="20" viewBox="0 0 25 20" fill="none" stroke="#1c8f3c" strokeWidth="2.600">
            <path d="M1.500 10 8 17.500 23.500 1.500" />
          </svg>
        </button>
      </main>
      <StatusBar />
    </div>
  );
}
